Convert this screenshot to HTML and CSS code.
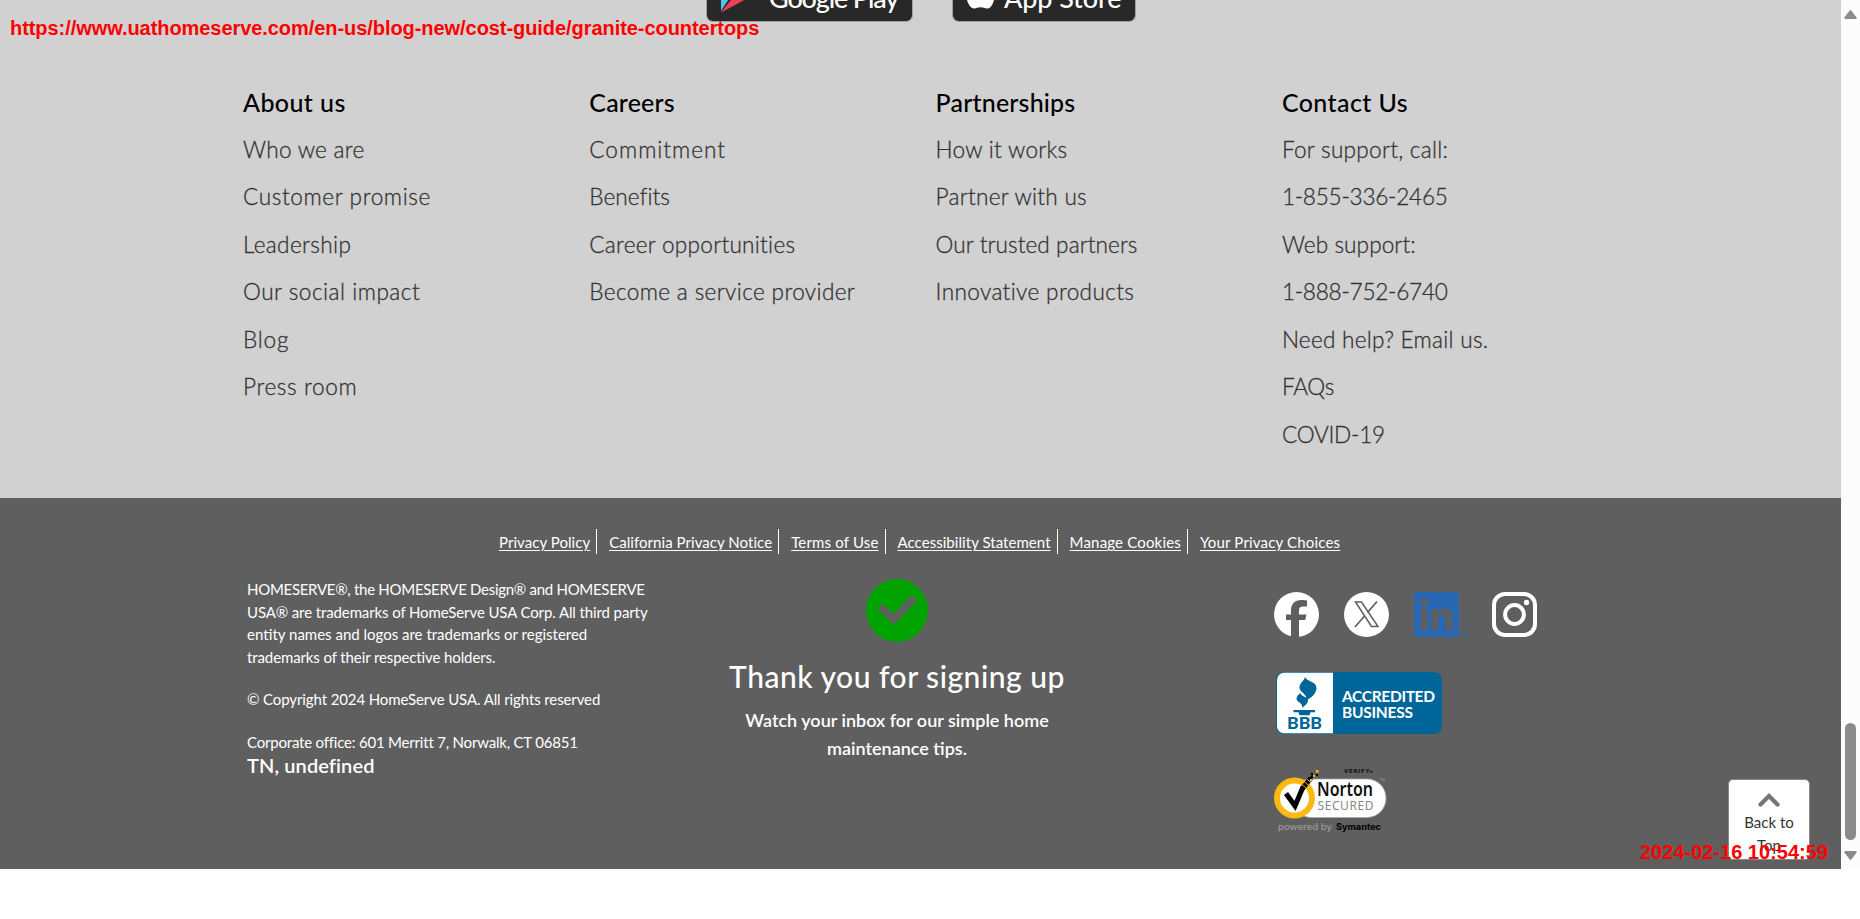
FILE: index.html
```html
<!DOCTYPE html>
<html lang="en">
<head>
<meta charset="utf-8">
<title>HomeServe</title>
<link rel="stylesheet" href="styles.css">
</head>
<body>
<div class="viewport">
  <div class="page">
    <section class="links-area">
      <div class="badges">
        <div class="badge google">
          <svg class="play" width="30" height="22" viewBox="0 0 30 22"><path d="M0 0h13L0 20z" fill="#4fc3e8"/><path d="M0 21.500 13 5l12 3L4 19.500z" fill="#ee4056"/></svg>
          <span>Google Play</span>
        </div>
        <div class="badge apple">
          <svg class="fruit" width="27" height="14" viewBox="0 0 27 14"><path d="M0 0h27c-1 4-3 7.500-5.500 8.300C18.500 9.200 17 7.300 13.500 7.300S8.500 9.200 6 8.300C3 7.400 1 4 0 0z" fill="#fff"/></svg>
          <span>App Store</span>
        </div>
      </div>
      <nav class="columns">
        <div class="col">
          <h3 class="h8">About us</h3>
          <a class="s5">Who we are</a><a class="s8">Customer promise</a><a class="s6">Leadership</a><a class="s7">Our social impact</a><a class="s9">Blog</a><a class="s8">Press room</a>
        </div>
        <div class="col">
          <h3 class="h6">Careers</h3>
          <a class="s10">Commitment</a><a class="s3">Benefits</a><a class="s5">Career opportunities</a><a class="s6">Become a service provider</a>
        </div>
        <div class="col">
          <h3 class="h6">Partnerships</h3>
          <a class="s5">How it works</a><a class="s5">Partner with us</a><a class="s3">Our trusted partners</a><a class="s6">Innovative products</a>
        </div>
        <div class="col">
          <h3 class="h8">Contact Us</h3>
          <a class="s5">For support, call:</a><a>1-855-336-2465</a><a class="s3">Web support:</a><a>1-888-752-6740</a><a class="s5">Need help? Email us.</a><a>FAQs</a><a>COVID-19</a>
        </div>
      </nav>
    </section>

    <footer class="footer">
      <nav class="policies">
        <a>Privacy Policy</a><a>California Privacy Notice</a><a class="wide">Terms of Use</a><a>Accessibility Statement</a><a class="wide">Manage Cookies</a><a class="wide">Your Privacy Choices</a>
      </nav>
      <div class="footer-grid">
        <div class="legal">
          <p><span class="n3">HOMESERVE®, the HOMESERVE Design® and HOMESERVE</span><br><span class="n1">USA® are trademarks of HomeServe USA Corp. All third party</span><br>entity names and logos are trademarks or registered<br><span class="n1">trademarks of their respective holders.</span></p>
          <p class="n1">© Copyright 2024 HomeServe USA. All rights reserved</p>
          <p class="n2">Corporate office: 601 Merritt 7, Norwalk, CT 06851</p>
          <div class="place">TN, undefined</div>
        </div>
        <div class="thanks">
          <svg width="62" height="63" viewBox="0 0 62 63"><ellipse cx="31" cy="31.500" rx="31" ry="31.500" fill="#00a300"/><path d="M14 27.500 27.700 40.500 48.500 18.500" fill="none" stroke="#5f5f5f" stroke-width="7.500"/></svg>
          <h2>Thank you for signing up</h2>
          <p>Watch your inbox for our simple home<br>maintenance tips.</p>
        </div>
        <div class="trust">
          <div class="social">
            <svg width="45" height="45" viewBox="0 0 45 45"><circle cx="22.500" cy="22.500" r="22.500" fill="#fff"/><path d="M17 45V28h-5V22.500h5V19c0-7.500 4-11 10-11 2.500 0 4.500.2 6 .5v6h-4c-3 0-4 1.500-4 4v4h7.500l-1.300 5.500h-6.200V45z" fill="#5f5f5f"/></svg>
            <svg width="45" height="45" viewBox="0 0 45 45"><circle cx="22.500" cy="22.500" r="22.500" fill="#fff"/><path d="M11.500 10h6L34 34.500h-6.500z" fill="none" stroke="#5f5f5f" stroke-width="1.500"/><path d="M33 9.500 23.500 20.500M20.500 24 11 35" stroke="#5f5f5f" stroke-width="1.700"/></svg>
            <svg width="53" height="45" viewBox="0 0 53 45"><rect width="45" height="45" rx="3" fill="#2867b2"/><circle cx="10.200" cy="10.300" r="3.900" fill="#5f5f5f"/><path d="M6.800 17h6.700v21H6.800zM17.500 17h6.500v3c1.200-2 3.500-3.500 6.700-3.500 6.200 0 7.500 4.200 7.500 10V38h-6.700V27.700c0-2.700-.3-5.300-3.500-5.300-3.300 0-3.800 2.600-3.800 5.200V38h-6.700z" fill="#5f5f5f"/><circle cx="50" cy="42.500" r="2" fill="none" stroke="#2867b2" stroke-width=".9"/><path d="M49.500 43.500v-2h1" fill="none" stroke="#2867b2" stroke-width=".6"/></svg>
            <svg width="45" height="45" viewBox="0 0 45 45"><rect x="2" y="2" width="41" height="41" rx="11" fill="none" stroke="#fff" stroke-width="4"/><circle cx="22.500" cy="22.500" r="9.400" fill="none" stroke="#fff" stroke-width="4"/><circle cx="34.500" cy="10.500" r="2.700" fill="#fff"/></svg>
          </div>
          <svg class="bbb" width="166" height="62" viewBox="0 0 166 62">
            <rect width="166" height="62" rx="8" fill="#006699"/><path d="M8 .8h49v60.400H8a7 7 0 0 1-7-7V8A7 7 0 0 1 8 .8z" fill="#fff"/>
            <path d="M29 5c-1 4-5.500 6-5.500 10.500 0 5 8 6 7 13 5-3 10-7 10-12.500C40.500 9 30.500 10 29 5zM24.500 21c-2 1.500-4 3.500-4 5.800 0 3.700 7 4 5.500 9 3-2 6-4.500 6-7.300 0-4-7-3.500-7.500-7.500zM17.500 38H39v2.200h-4.500l-1 3h-10l-1-3h-5z" fill="#006699"/>
            <text x="11" y="57" class="bbb-mark" textLength="35" lengthAdjust="spacingAndGlyphs">BBB</text>
            <text x="66" y="29.500" class="bbb-text" textLength="93">ACCREDITED</text><text x="66" y="46" class="bbb-text" textLength="71">BUSINESS</text>
          </svg>
          <svg class="norton" width="114" height="66" viewBox="0 0 114 66">
            <text x="70" y="6" class="verify" textLength="29">VERIFY▸</text>
            <rect x="18" y="12" width="94" height="38.500" rx="19" fill="#fff" stroke="#aaa" stroke-width=".8"/>
            <circle cx="20.500" cy="31" r="17.500" fill="#fff" stroke="#fdb913" stroke-width="6"/>
            <path d="M12 26.500 21 39 29 20" fill="none" stroke="#000" stroke-width="5"/><path d="M28 22 37 11" stroke="#000" stroke-width="5" stroke-dasharray="3 .7"/><path d="M35 11l3-3h3l-3 4zM37 6h2v2h-2zM42 7h2v2h-2z" fill="#000"/><path d="M39 8h2v2h-2zM42 3h2.500v2.500H42zM36 12h2v2h-2z" fill="#fdb913"/>
            <text x="43" y="29" class="norton-name" textLength="56" lengthAdjust="spacingAndGlyphs">Norton</text><text x="43.500" y="42.500" class="norton-sec" textLength="56">SECURED</text><text x="105" y="14" class="tm">TM</text>
            <text x="4" y="62.500" class="powered" textLength="54" lengthAdjust="spacingAndGlyphs">powered by</text><text x="62" y="62.500" class="symantec" textLength="45" lengthAdjust="spacingAndGlyphs">Symantec</text>
          </svg>
        </div>
      </div>
    </footer>
  </div>
  <div class="scrollbar">
    <svg width="13" height="9" viewBox="0 0 13 9"><path d="M5.500.8Q6.500-.3 7.500.8L12.600 7.500Q13 9 11.500 9H1.500Q0 9 .4 7.500z" fill="#8b8b8b"/></svg>
    <div class="thumb"></div>
    <svg width="13" height="9" viewBox="0 0 13 9"><path d="M5.500 8.200Q6.500 9.300 7.500 8.200L12.600 1.500Q13 0 11.500 0H1.500Q0 0 .4 1.500z" fill="#8b8b8b"/></svg>
  </div>
</div>
<div class="back-top">
  <svg width="22" height="14" viewBox="0 0 22 14"><path d="M2.500 11.500 11 3l8.500 8.500" fill="none" stroke="#757575" stroke-width="4.200" stroke-linecap="round"/></svg>
  <span>Back to<br>Top</span>
</div>
<div class="stamp url">https://www.uathomeserve.com/en-us/blog-new/cost-guide/granite-countertops</div>
<div class="stamp date">2024-02-16 10:54:59</div>
</body>
</html>
```

FILE: styles.css
```css
* { box-sizing: border-box; }
body { margin: 0; background: #fff; font-family: Lato, sans-serif; position: relative; height: 919px; overflow: hidden; }
h2, h3, p { margin: 0; font-weight: 500; }
svg { display: block; flex: none; }

.viewport { display: flex; height: 869px; }
.page { flex: 1; display: flex; flex-direction: column; }

.links-area { height: 498px; background: #d1d1d1; display: flex; flex-direction: column; }
.badges { display: flex; gap: 39px; padding-left: 706px; height: 22px; margin-bottom: 65px; }
.badge { height: 22px; background: #282828; border: 1px solid #a0a0a0; border-top: 0; border-radius: 0 0 7px 7px; display: flex; align-items: flex-start; overflow: hidden; color: #fff; font-weight: 500; white-space: nowrap; }
.badge span { display: block; line-height: 28px; margin-top: -17px; }
.google { width: 207px; padding-left: 14px; }
.google .play { margin-top: -9px; }
.google span { margin-left: 18px; font-size: 27px; letter-spacing: -1.150px; margin-top: -16px; }
.apple { width: 184px; padding-left: 14px; }
.apple span { margin-left: 10px; font-size: 27px; letter-spacing: -.1px; margin-top: -16px; }

.columns { display: grid; grid-template-columns: repeat(4, 346.3px); padding-left: 243px; }
.col { display: flex; flex-direction: column; }
.col h3 { font-size: 25px; line-height: 30px; color: #000; margin-bottom: 9px; white-space: nowrap; }
.col a { font-size: 22.600px; font-weight: 300; line-height: 47.45px; letter-spacing: -.25px; color: #333; -webkit-text-stroke: .3px #333; white-space: nowrap; }
.col .h6 { letter-spacing: .18px; }
.col .h8 { letter-spacing: .4px; }
.col .s3 { letter-spacing: .08px; }
.col .s5 { letter-spacing: .27px; }
.col .s6 { letter-spacing: .36px; }
.col .s7 { letter-spacing: .5px; }
.col .s8 { letter-spacing: .62px; }
.col .s9 { letter-spacing: .8px; }
.col .s10 { letter-spacing: 1px; }
.n1 { letter-spacing: -.11px; }
.n2 { letter-spacing: -.2px; }
.n3 { letter-spacing: -.29px; }

.footer { height: 371px; background: #5f5f5f; color: #fff; padding-top: 31px; }
.policies { display: flex; padding-left: 499px; height: 25px; }
.policies a { font-size: 15px; line-height: 27px; letter-spacing: .05px; text-decoration: underline; text-underline-offset: 2px; text-decoration-thickness: 1px; padding-right: 6px; margin-right: 12px; border-right: 1px solid #fff; white-space: nowrap; }
.policies .wide { letter-spacing: .17px; }
.policies a:last-child { border: 0; }

.footer-grid { display: grid; grid-template-columns: 450px 400px 1fr; padding-left: 247px; }
.legal { padding-top: 24px; font-size: 15px; line-height: 22.7px; white-space: nowrap; }
.legal p { font-weight: 400; margin-bottom: 19.5px; }
.legal p:nth-of-type(3) { margin-bottom: 0; }
.place { font-size: 20px; font-weight: 600; line-height: 24px; letter-spacing: .1px; }
.thanks { padding-top: 25px; display: flex; flex-direction: column; align-items: center; text-align: center; }
.thanks h2 { font-size: 30px; line-height: 36px; letter-spacing: .5px; margin-top: 16px; white-space: nowrap; }
.thanks p { font-size: 18px; line-height: 28px; margin-top: 12px; font-weight: 600; white-space: nowrap; }
.trust { padding: 38px 0 0 177px; }
.social { display: flex; gap: 25px; }
.bbb { margin: 35px 0 0 2px; }
.norton { margin-top: 33px; }
.bbb-mark { font: 900 17px Lato, sans-serif; fill: #006699; }
.bbb-text { font: 700 15.5px Lato, sans-serif; fill: #fff; }
.verify { font: 700 5.5px "DejaVu Sans", sans-serif; fill: #111; }
.norton-name { font: 600 19px "Noto Sans", sans-serif; fill: #111; }
.norton-sec { font: 400 12px "Noto Sans", sans-serif; fill: #888; }
.tm { font: 400 4px Inter, sans-serif; fill: #999; }
.powered { font: 500 9px Inter, sans-serif; fill: #999; }
.symantec { font: 700 9px Inter, sans-serif; fill: #000; }

.scrollbar { width: 19px; background: #fcfcfc; padding: 10px 3px 9px; display: flex; flex-direction: column; align-items: center; }
.thumb { width: 11px; height: 117px; border-radius: 6px; background: #8b8b8b; margin: 704px 0 11px; }

.back-top { position: absolute; left: 1728px; top: 779px; width: 82px; height: 81px; background: #fff; border: 1px solid #888; border-radius: 5px; display: flex; flex-direction: column; align-items: center; padding-top: 13px; text-align: center; font-size: 15px; line-height: 23px; color: #333; }
.back-top span { margin-top: 4px; }
.stamp { position: absolute; font: bold 20px/24px "Liberation Sans", Arial, sans-serif; color: #f00; white-space: nowrap; }
.url { left: 10px; top: 16px; letter-spacing: -.06px; }
.date { left: 1640px; top: 840px; }
```
